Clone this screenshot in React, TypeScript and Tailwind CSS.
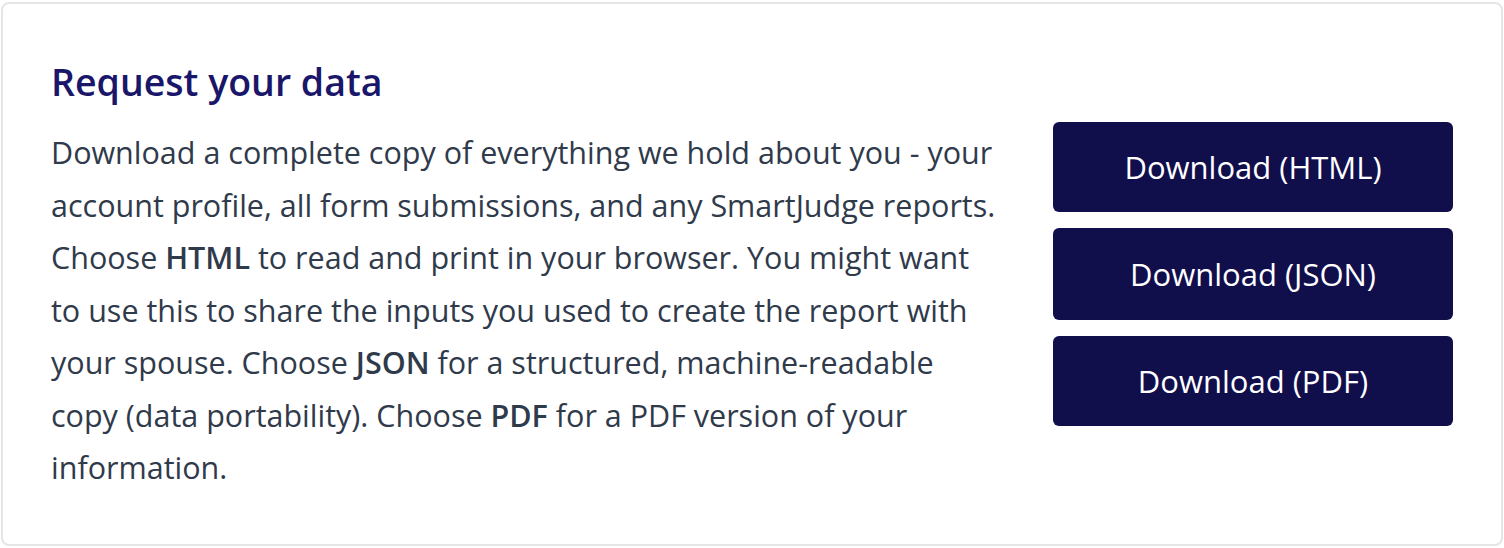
import React from "react";

export default function App() {
  const font = { fontFamily: "'Open Sans', Lato, sans-serif" };
  return (
    <div className="w-[1504px] h-[548px] bg-white pt-[2px] pl-[1px]" style={font}>
      <div className="w-[1502px] h-[544px] rounded-lg border-2 border-[#e5e5e5] bg-white px-12 pt-[54px] flex gap-12">
        <div className="flex-1 min-w-0">
          <h2 className="text-[37.5px] leading-[48px] font-semibold text-[#1a1669]">Request your data</h2>
          <p className="mt-[20px] text-[30.5px] leading-[52.5px] text-[#2f3a4b] whitespace-nowrap">
            Download a complete copy of everything we hold about you - your<br />
            account profile, all form submissions, and any SmartJudge reports.<br />
            Choose <strong className="font-semibold">HTML</strong> to read and print in your browser. You might want<br />
            to use this to share the inputs you used to create the report with<br />
            your spouse. Choose <strong className="font-semibold">JSON</strong> for a structured, machine-readable<br />
            copy (data portability). Choose <strong className="font-semibold">PDF</strong> for a PDF version of your<br />
            information.
          </p>
        </div>
        <div className="w-[400px] shrink-0 flex flex-col gap-4 pt-[64px]">
          <button className="h-[90px] rounded-md bg-[#110e4c] text-white text-[31px]">Download (HTML)</button>
          <button className="h-[92px] rounded-md bg-[#110e4c] text-white text-[31px]">Download (JSON)</button>
          <button className="h-[90px] rounded-md bg-[#110e4c] text-white text-[31px]">Download (PDF)</button>
        </div>
      </div>
    </div>
  );
}
